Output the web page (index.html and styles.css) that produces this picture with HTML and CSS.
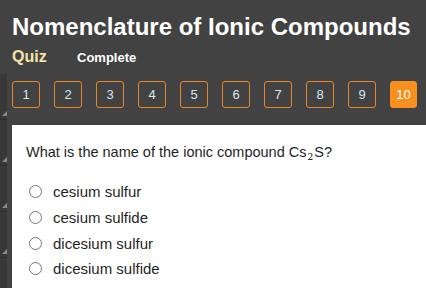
FILE: index.html
```html
<!DOCTYPE html>
<html>
<head>
<meta charset="utf-8">
<link rel="stylesheet" href="styles.css">
</head>
<body>
<div class="page">
  <div class="side">
    <div class="seg"></div>
    <div class="seg"></div>
    <div class="seg"></div>
    <div class="seg"></div>
    <div class="seg"></div>
  </div>
  <div class="main">
    <header class="head">
      <h1 class="title">Nomenclature of Ionic Compounds</h1>
      <div class="tabs">
        <span class="quiz">Quiz</span>
        <span class="complete">Complete</span>
      </div>
      <nav class="nums">
        <span class="num">1</span>
        <span class="num">2</span>
        <span class="num">3</span>
        <span class="num">4</span>
        <span class="num">5</span>
        <span class="num">6</span>
        <span class="num">7</span>
        <span class="num">8</span>
        <span class="num">9</span>
        <span class="num active">10</span>
      </nav>
    </header>
    <section class="card">
      <p class="question">What is the name of the ionic compound Cs<sub class="sub">2</sub>S?</p>
      <ul class="opts">
        <li class="opt"><span class="radio"></span>cesium sulfur</li>
        <li class="opt"><span class="radio"></span>cesium sulfide</li>
        <li class="opt"><span class="radio"></span>dicesium sulfur</li>
        <li class="opt"><span class="radio"></span>dicesium sulfide</li>
      </ul>
    </section>
  </div>
</div>
</body>
</html>
```
FILE: styles.css
```css
* { box-sizing: border-box; }
html, body { margin: 0; padding: 0; }
body {
  background: #424242;
  font-family: "Liberation Sans", Arial, sans-serif;
  width: 426px;
  height: 288px;
  overflow: hidden;
}
.page { position: relative; display: flex; height: 288px; overflow: hidden; }
.side {
  position: absolute;
  left: 0; top: 74px; bottom: 0;
  width: 7px;
  display: flex;
  flex-direction: column;
  overflow: hidden;
}
.seg {
  position: relative;
  flex: none;
  height: 46px;
  background: #383838;
  border-bottom: 1px solid #2c2c2c;
}
.seg::after {
  content: "";
  position: absolute;
  right: 0; bottom: 3px;
  width: 0; height: 0;
  border-left: 5px solid transparent;
  border-bottom: 5px solid #8a8a8a;
}
.main { flex: 1; display: flex; flex-direction: column; height: 288px; }
.head { padding: 0 0 0 12px; }
.title {
  margin: 0;
  padding-top: 13px;
  font-size: 24px;
  line-height: 28px;
  font-weight: bold;
  color: #ffffff;
  white-space: nowrap;
}
.tabs { display: flex; align-items: baseline; margin-top: 7px; height: 20px; }
.quiz { color: #f7e2a6; font-weight: bold; font-size: 16px; width: 65px; }
.complete { color: #ffffff; font-weight: bold; font-size: 13px; }
.nums { display: flex; gap: 14px; margin-top: 13px; }
.num {
  width: 28px; height: 27px;
  border: 1px solid #e8862a;
  border-radius: 3px;
  color: #d9e6f5;
  font-size: 13px;
  display: flex; align-items: center; justify-content: center;
}
.num.active { background: #f7901e; border-color: #f7901e; color: #fff; width: 27px; }
.card {
  margin: 17px 0 0 12px;
  background: #ffffff;
  flex: 1;
  min-height: 0;
  padding: 18px 0 0 14px;
}
.question {
  margin: 0;
  font-size: 14.5px;
  line-height: 18px;
  color: #1f1f1f;
}
.sub {
  font-family: "DejaVu Serif", serif;
  font-size: 9px;
  color: #000;
  vertical-align: -3px;
  line-height: 0;
  margin: 0 1px;
}
.opts { list-style: none; margin: 18px 0 0 0; padding: 0; }
.opt {
  display: flex; align-items: center;
  height: 25.7px;
  font-size: 15px;
  color: #1f1f1f;
}
.radio {
  width: 13px; height: 13px;
  border: 1px solid #767676;
  border-radius: 50%;
  margin: 0 11px 0 3px;
}
```
